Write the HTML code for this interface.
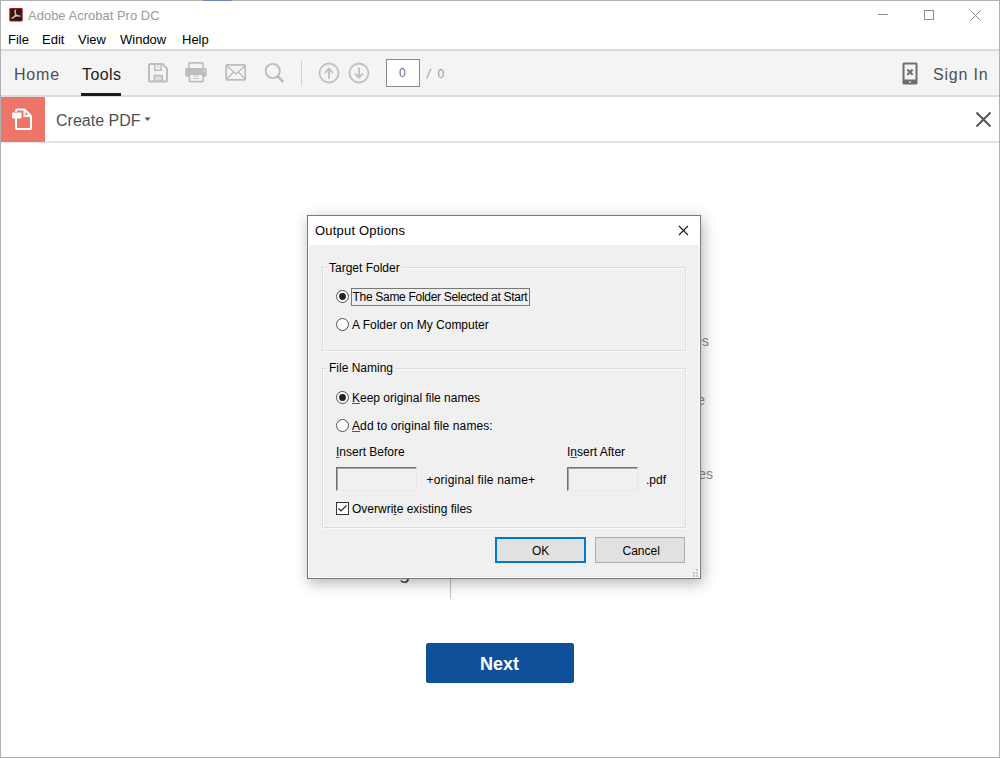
<!DOCTYPE html>
<html><head><meta charset="utf-8">
<style>
html,body{margin:0;padding:0;}
body{width:1000px;height:758px;overflow:hidden;position:relative;background:#fff;font-family:"Liberation Sans",sans-serif;}
.a{position:absolute;}
.t{position:absolute;white-space:pre;line-height:1;}
svg{position:absolute;overflow:visible;}
</style></head><body>
<!-- window frame -->
<div class="a" style="left:0;top:0;width:1000px;height:758px;box-sizing:border-box;border:1px solid #b0b0b0;"></div>

<div class="a" style="left:203px;top:0;width:29px;height:1px;background:#6f86b2;"></div>
<!-- title bar -->
<svg style="left:9px;top:8px" width="14" height="14" viewBox="0 0 14 14">
  <rect x="0.9" y="0.6" width="12.2" height="12.4" rx="0.8" fill="#2a1414" stroke="#a3170e" stroke-width="1.2"/>
  <path d="M6.7 2.1 C5.7 2.1 5.9 4.3 6.7 6.5 C5.8 8.5 4.3 9.9 3.1 10.1 M6.7 6.5 C7.9 7.7 9.3 8.3 10.9 8 M3.7 9.5 C5.7 8.2 8.5 7.7 10.9 8.1" fill="none" stroke="#dccaca" stroke-width="1.3" stroke-linecap="round"/>
</svg>
<div class="t" style="left:28px;top:8.5px;font-size:13px;color:#9a9a9a;">Adobe Acrobat Pro DC</div>
<!-- window controls -->
<div class="a" style="left:878px;top:14px;width:10px;height:1px;background:#8c8c8c;"></div>
<div class="a" style="left:924px;top:10px;width:10px;height:10px;box-sizing:border-box;border:1px solid #8c8c8c;"></div>
<svg style="left:970px;top:10px" width="11" height="11" viewBox="0 0 11 11"><path d="M0.5 0.5 L10.5 10.5 M10.5 0.5 L0.5 10.5" stroke="#8c8c8c" stroke-width="1"/></svg>

<!-- menu -->
<div class="t" style="left:8px;top:33px;font-size:13px;color:#000;">File</div>
<div class="t" style="left:42px;top:33px;font-size:13px;color:#000;">Edit</div>
<div class="t" style="left:78px;top:33px;font-size:13px;color:#000;">View</div>
<div class="t" style="left:120px;top:33px;font-size:13px;color:#000;">Window</div>
<div class="t" style="left:182px;top:33px;font-size:13px;color:#000;">Help</div>

<!-- toolbar -->
<div class="a" style="left:1px;top:49px;width:998px;height:2px;background:#dadada;"></div>
<div class="a" style="left:1px;top:51px;width:998px;height:44px;background:#f4f4f4;"></div>
<div class="a" style="left:1px;top:95px;width:998px;height:2px;background:#dcdcdc;"></div>
<div class="t" style="left:14px;top:66.5px;font-size:16px;color:#4e4e4e;letter-spacing:0.8px;">Home</div>
<div class="t" style="left:82px;top:66.5px;font-size:16px;color:#1c1c1c;letter-spacing:0.4px;">Tools</div>
<div class="a" style="left:81px;top:93px;width:40px;height:3px;background:#1c1c1c;"></div>

<!-- create pdf header -->
<div class="t" style="left:56px;top:113px;font-size:16px;color:#505050;">Create PDF</div>
<div class="a" style="left:1px;top:141px;width:998px;height:2px;background:#e3e3e3;"></div>
<div class="a" style="left:1px;top:97px;width:44px;height:45px;background:#ed756a;"></div>


<!-- toolbar icons -->
<svg style="left:147px;top:62px" width="22" height="22" viewBox="0 0 22 22">
  <path d="M3 2 H15.5 L20 6.5 V18.5 Q20 19.5 19 19.5 H3 Q2 19.5 2 18.5 V3 Q2 2 3 2 Z" fill="none" stroke="#bdbdbd" stroke-width="2" stroke-linejoin="round"/>
  <path d="M7.8 2 V8.2 H14.2 V2" fill="none" stroke="#bdbdbd" stroke-width="1.6"/>
  <rect x="10.6" y="3.4" width="1.2" height="2.2" fill="#bdbdbd"/>
  <rect x="7.3" y="13.6" width="8" height="5.4" fill="#dedede" stroke="#bdbdbd" stroke-width="1.6"/>
</svg>
<svg style="left:185px;top:62px" width="23" height="22" viewBox="0 0 23 22">
  <rect x="3.9" y="0.9" width="14.2" height="6.5" rx="1" fill="none" stroke="#bdbdbd" stroke-width="1.7"/>
  <path d="M1.6 6 H20.2 Q21.6 6 21.6 7.4 V13.3 Q21.6 14.7 20.2 14.7 H1.6 Q0.2 14.7 0.2 13.3 V7.4 Q0.2 6 1.6 6 Z" fill="#bdbdbd"/>
  <rect x="4.4" y="12.1" width="13.7" height="7.6" rx="0.8" fill="#f3f3f3" stroke="#bdbdbd" stroke-width="1.7"/>
  <rect x="8" y="13.6" width="6" height="1" fill="#c8c8c8"/>
  <rect x="8" y="16" width="6" height="1" fill="#c8c8c8"/>
  <rect x="18" y="7.8" width="1.8" height="1.4" fill="#e6e6e6"/>
</svg>
<svg style="left:225px;top:64px" width="22" height="17" viewBox="0 0 22 17">
  <rect x="1.2" y="0.9" width="19" height="15" rx="1" fill="none" stroke="#bdbdbd" stroke-width="1.8"/>
  <path d="M1.5 1.5 L11 10 L20.5 1.5 M1.5 15.5 L8.5 8 M20.5 15.5 L13.5 8" fill="none" stroke="#bcbcbc" stroke-width="1.3"/>
</svg>
<svg style="left:263px;top:62px" width="23" height="22" viewBox="0 0 23 22">
  <circle cx="9.7" cy="9" r="7.1" fill="none" stroke="#bdbdbd" stroke-width="1.9"/>
  <path d="M15 14.5 L19.6 19.3" stroke="#bdbdbd" stroke-width="2.6" stroke-linecap="round"/>
</svg>
<div class="a" style="left:301px;top:60px;width:1px;height:26px;background:#d4d4d4;"></div>
<svg style="left:318px;top:61.5px" width="22" height="22" viewBox="0 0 22 22">
  <circle cx="11" cy="11" r="9.5" fill="none" stroke="#c2c2c2" stroke-width="1.8"/>
  <path d="M11 16.8 V6.6 M7 10.8 L11 6.6 L15 10.8" fill="none" stroke="#c2c2c2" stroke-width="1.9"/>
</svg>
<svg style="left:348px;top:61.5px" width="22" height="22" viewBox="0 0 22 22">
  <circle cx="11" cy="11" r="9.5" fill="none" stroke="#c2c2c2" stroke-width="1.8"/>
  <path d="M11 5.6 V15.6 M7 11.4 L11 15.6 L15 11.4" fill="none" stroke="#c2c2c2" stroke-width="1.9"/>
</svg>
<div class="a" style="left:386px;top:59px;width:34px;height:28px;box-sizing:border-box;border:1px solid #8a8a8a;background:#fff;"></div>
<div class="t" style="left:399px;top:67px;font-size:12px;color:#6c6c6c;">0</div>
<svg style="left:425px;top:68px" width="8" height="12" viewBox="0 0 8 12"><path d="M1.6 10.6 L6 0.8" stroke="#a4a4a4" stroke-width="1.1"/></svg>
<div class="t" style="left:437.5px;top:68px;font-size:12px;color:#9a9a9a;">0</div>

<!-- phone icon & sign in -->
<svg style="left:902px;top:61.5px" width="16" height="23" viewBox="0 0 16 23">
  <rect x="0.5" y="0.5" width="15" height="22" rx="1.5" fill="#6e6e6e"/>
  <rect x="2.5" y="2.5" width="11" height="15" fill="#f4f4f4"/>
  <path d="M5.3 7.4 L10.7 12.8 M10.7 7.4 L5.3 12.8" stroke="#6e6e6e" stroke-width="2.1"/>
  <rect x="7.2" y="19.4" width="1.6" height="1.4" fill="#f4f4f4"/>
</svg>
<div class="t" style="left:933px;top:66.5px;font-size:16px;color:#505050;letter-spacing:0.8px;">Sign In</div>

<!-- header icon & close -->
<svg style="left:11px;top:108px" width="23" height="23" viewBox="0 0 23 23">
  <path d="M5 10 V20 Q5 21 6 21 H19 Q20 21 20 20 V8 L13.5 1.5 H6 Q5 1.5 5 2.5 V4" fill="none" stroke="#fff" stroke-width="2" stroke-linejoin="round"/>
  <path d="M13.5 2 V8 H20" fill="none" stroke="#fff" stroke-width="2"/>
  <rect x="1" y="4.5" width="9.5" height="6" rx="1" fill="#fff"/>
</svg>
<svg style="left:144px;top:117px" width="7" height="5" viewBox="0 0 7 5"><path d="M0.5 0.5 H6.5 L3.5 4 Z" fill="#555"/></svg>
<svg style="left:975px;top:111px" width="17" height="17" viewBox="0 0 17 17"><path d="M1.5 1.5 L15.5 15.5 M15.5 1.5 L1.5 15.5" stroke="#555" stroke-width="2"/></svg>

<!-- next button -->
<div class="a" style="left:425.5px;top:643px;width:148px;height:40px;background:#0f509a;border-radius:2.5px;"></div>
<div class="t" style="left:480px;top:655px;font-size:18px;font-weight:bold;color:#fff;">Next</div>


<!-- background fragments under dialog -->
<div class="t" style="right:291px;top:334px;font-size:14px;color:#8c8c8c;">files</div>
<div class="t" style="right:295px;top:393px;font-size:14px;color:#8c8c8c;">e</div>
<div class="t" style="right:287px;top:467px;font-size:14px;color:#8c8c8c;">files</div>
<div class="t" style="left:399px;top:562px;font-size:20px;color:#4a4a4a;">g</div>
<div class="a" style="left:450px;top:579px;width:1px;height:20px;background:#c2c2c2;"></div>

<!-- dialog -->
<div class="a" style="left:307px;top:215px;width:394px;height:364px;box-sizing:border-box;border:1px solid #7a7a7a;background:#f0f0f0;box-shadow:inset 0 0 0 1px #fff, 2px 4px 14px rgba(0,0,0,0.3);"></div>
<div class="a" style="left:308px;top:216px;width:392px;height:29px;background:#fff;"></div>
<div class="t" style="left:315px;top:223.8px;font-size:13px;color:#000;letter-spacing:0.2px;">Output Options</div>


<svg style="left:678px;top:225px" width="11" height="11" viewBox="0 0 11 11"><path d="M1 1 L10 10 M10 1 L1 10" stroke="#1a1a1a" stroke-width="1.1"/></svg>

<!-- group 1 -->
<div class="a" style="left:322px;top:267px;width:364px;height:84px;box-sizing:border-box;border:1px solid #dcdcdc;box-shadow:inset 1px 1px 0 #fafafa, 1px 1px 0 #fafafa;"></div>
<div class="t" style="left:327px;top:261.7px;font-size:12px;color:#000;background:#f0f0f0;padding:0 2px;">Target Folder</div>
<!-- radio 1 checked -->
<svg style="left:336px;top:290px" width="13" height="13" viewBox="0 0 13 13"><circle cx="6.5" cy="6.5" r="6" fill="#fff" stroke="#505050" stroke-width="1"/><circle cx="6.5" cy="6.5" r="3.4" fill="#222"/></svg>
<div class="a" style="left:351px;top:288px;width:179px;height:18px;box-sizing:border-box;border:1px solid #777;"></div>
<div class="t" style="left:352.5px;top:291.2px;font-size:12px;color:#000;letter-spacing:-0.3px;">The Same Folder Selected at Start</div>
<svg style="left:336px;top:318px" width="13" height="13" viewBox="0 0 13 13"><circle cx="6.5" cy="6.5" r="6" fill="#fff" stroke="#505050" stroke-width="1"/></svg>
<div class="t" style="left:352px;top:319.2px;font-size:12px;color:#000;">A Folder on My Computer</div>

<!-- group 2 -->
<div class="a" style="left:322px;top:368px;width:364px;height:160px;box-sizing:border-box;border:1px solid #dcdcdc;box-shadow:inset 1px 1px 0 #fafafa, 1px 1px 0 #fafafa;"></div>
<div class="t" style="left:327px;top:362.3px;font-size:12px;color:#000;background:#f0f0f0;padding:0 2px;">File Naming</div>
<svg style="left:336px;top:391px" width="13" height="13" viewBox="0 0 13 13"><circle cx="6.5" cy="6.5" r="6" fill="#fff" stroke="#505050" stroke-width="1"/><circle cx="6.5" cy="6.5" r="3.4" fill="#222"/></svg>
<div class="t" style="left:352px;top:391.8px;font-size:12px;color:#000;"><u style="text-decoration-thickness:1px;text-underline-offset:1px;text-decoration-color:#555">K</u>eep original file names</div>
<svg style="left:336px;top:419px" width="13" height="13" viewBox="0 0 13 13"><circle cx="6.5" cy="6.5" r="6" fill="#fff" stroke="#505050" stroke-width="1"/></svg>
<div class="t" style="left:352px;top:419.6px;font-size:12px;color:#000;letter-spacing:0.1px;"><u style="text-decoration-thickness:1px;text-underline-offset:1px;text-decoration-color:#555">A</u>dd to original file names:</div>
<div class="t" style="left:336px;top:445.7px;font-size:12px;color:#000;"><u style="text-decoration-thickness:1px;text-underline-offset:1px;text-decoration-color:#555">I</u>nsert Before</div>
<div class="t" style="left:567px;top:445.7px;font-size:12px;color:#000;">I<u style="text-decoration-thickness:1px;text-underline-offset:1px;text-decoration-color:#555">n</u>sert After</div>
<!-- inputs -->
<div class="a" style="left:336px;top:467px;width:81px;height:24px;box-sizing:border-box;border-top:1px solid #727272;border-left:1px solid #727272;border-right:1px solid #e8e8e8;border-bottom:1px solid #e8e8e8;box-shadow:inset 1px 1px 0 #a6a6a6;"></div>
<div class="t" style="left:426.5px;top:473.7px;font-size:12px;color:#000;letter-spacing:0.2px;">+original file name+</div>
<div class="a" style="left:567px;top:467px;width:71px;height:24px;box-sizing:border-box;border-top:1px solid #727272;border-left:1px solid #727272;border-right:1px solid #e8e8e8;border-bottom:1px solid #e8e8e8;box-shadow:inset 1px 1px 0 #a6a6a6;"></div>
<div class="t" style="left:646px;top:473.7px;font-size:12px;color:#000;">.pdf</div>
<!-- checkbox -->
<div class="a" style="left:336px;top:502px;width:13px;height:13px;box-sizing:border-box;border:1px solid #333;background:#fff;"></div>
<svg style="left:336px;top:502px" width="13" height="13" viewBox="0 0 13 13"><path d="M2.5 6.5 L5 9 L10.5 3.5" fill="none" stroke="#222" stroke-width="1.2"/></svg>
<div class="t" style="left:352px;top:503px;font-size:12px;color:#000;">Overwri<u style="text-decoration-thickness:1px;text-underline-offset:1px;text-decoration-color:#555">t</u>e existing files</div>

<!-- buttons -->
<div class="a" style="left:495px;top:537px;width:91px;height:26px;box-sizing:border-box;border:2px solid #0078d7;background:#e1e1e1;"></div>
<div class="t" style="left:532px;top:545px;font-size:12px;color:#000;">OK</div>
<div class="a" style="left:595px;top:537px;width:90px;height:26px;box-sizing:border-box;border:1px solid #adadad;background:#e1e1e1;"></div>
<div class="t" style="left:622.5px;top:545px;font-size:12px;color:#000;">Cancel</div>
<!-- grip -->
<div class="a" style="left:696px;top:569px;width:2px;height:2px;background:#c6c6c6;"></div>
<div class="a" style="left:693px;top:572px;width:2px;height:2px;background:#c6c6c6;"></div>
<div class="a" style="left:696px;top:572px;width:2px;height:2px;background:#c6c6c6;"></div>
<div class="a" style="left:693px;top:575px;width:2px;height:2px;background:#c6c6c6;"></div>
<div class="a" style="left:696px;top:575px;width:2px;height:2px;background:#c6c6c6;"></div>
</body></html>
